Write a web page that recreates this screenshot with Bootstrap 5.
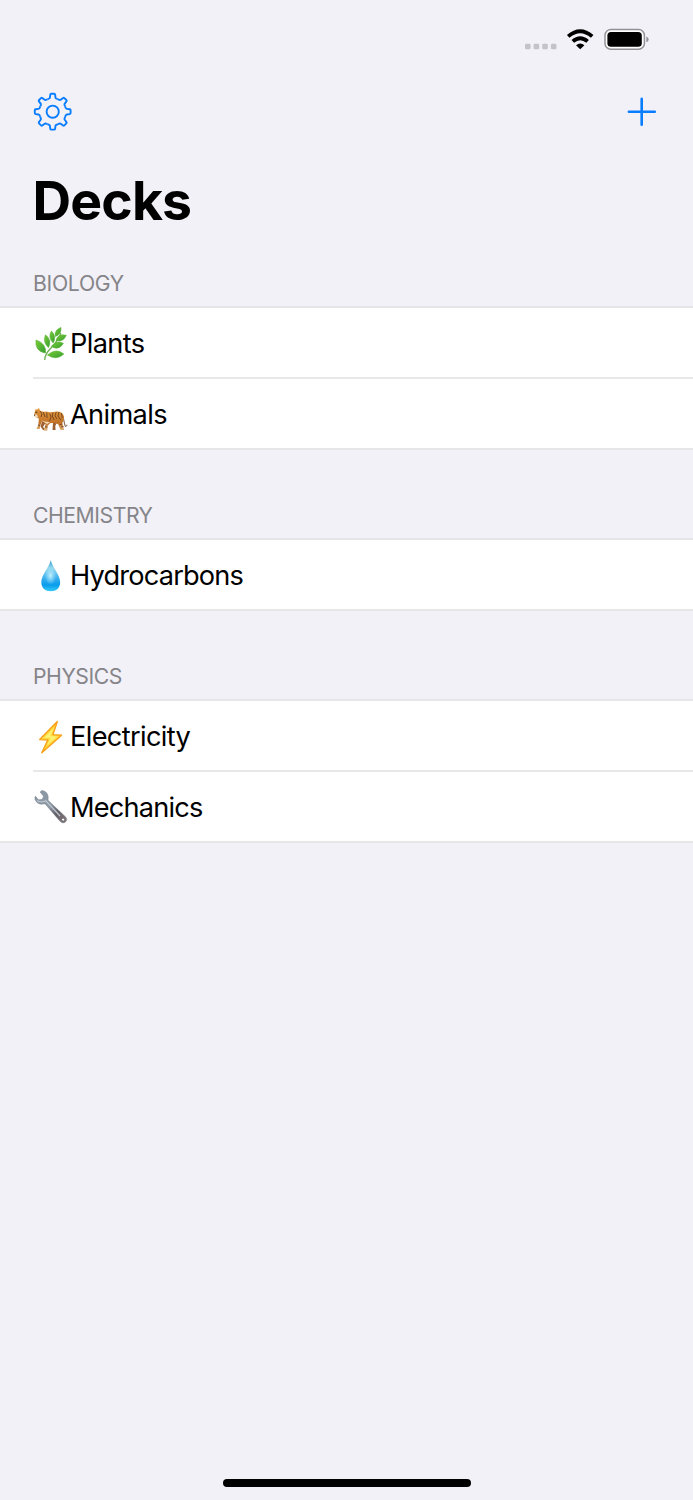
<!DOCTYPE html>
<html lang="en">
<head>
<meta charset="utf-8">
<meta name="viewport" content="width=device-width, initial-scale=1">
<title>Decks</title>
<link href="https://cdn.jsdelivr.net/npm/bootstrap@5.3.0/dist/css/bootstrap.min.css" rel="stylesheet">
<style>
  body { background: #f2f1f7; color: #000; font-family: Inter, "Liberation Sans", sans-serif; }
  .screen { height: 1500px; overflow: hidden; }
  .status { height: 78px; padding: 23px 38px 0 0; }
  .toolbar { height: 66px; padding: 0 33px; }
  .title { font-size: 53.5px; line-height: 64px; font-weight: 700; letter-spacing: -.85px; margin: 25px 0 0 32.5px; }
  .group-head { font-size: 21.2px; line-height: 26px; color: #858489; padding-left: 33px; margin: 52px 0 10px; font-weight: 400; letter-spacing: -.45px; }
  .title + .group-head { margin-top: 37px; letter-spacing: -.3px; }
  .deck-list { border-top: 2px solid #e6e6e9; border-bottom: 2px solid #e6e6e9; background: #fff; border-radius: 0; }
  .deck { height: 69px; padding: 2px 0 0 33px; border: 0; background: #fff; color: #000; border-radius: 0 !important; }
  .deck + .deck { height: 71px; padding-top: 4px; }
  .deck + .deck::before { content: ""; position: absolute; left: 33px; right: 0; top: 0; height: 1.5px; background: #e8e8ea; }
  .deck svg { width: 36px; height: 36px; flex: none; }
  .deck span { font-size: 27.2px; line-height: 34px; margin-left: 1px; letter-spacing: -.65px; }
  .deck .tight { letter-spacing: -.82px; }
  .home { width: 248px; height: 8px; border-radius: 4px; background: #000; margin-bottom: 13px; }
</style>
</head>
<body>
<main class="screen d-flex flex-column">
  <div class="status d-flex justify-content-end align-items-start">
    <svg width="132" height="34" viewBox="523 23 132 34">
      <g fill="#c4c3c8"><rect x="525" y="43.7" width="5.6" height="5.6" rx="1.4"/><rect x="533.6" y="43.7" width="5.6" height="5.6" rx="1.4"/><rect x="542.2" y="43.7" width="5.6" height="5.6" rx="1.4"/><rect x="550.9" y="43.7" width="5.6" height="5.6" rx="1.4"/></g>
      <g fill="none" stroke="#000" stroke-width="3.9"><path d="M568.2 36.4Q580.2 26 592.2 36.4"/><path d="M572.8 41.4Q580.2 35 587.6 41.4"/></g>
      <path d="M576 45.2Q580.2 41.9 584.4 45.2L580.2 49.3Z"/>
      <rect x="605" y="29.6" width="39.4" height="19.6" rx="5.8" fill="#fff" stroke="#929196" stroke-width="1.5"/>
      <rect x="607.4" y="32" width="34.4" height="14.8" rx="3.6"/>
      <path d="M646.3 36.5Q648.7 37.4 648.7 39.4T646.3 42.3Z" fill="#929196"/>
    </svg>
  </div>
  <nav class="toolbar d-flex justify-content-between align-items-center">
    <svg width="40" height="40" viewBox="-19.7 -20.7 40 40" fill="none" stroke="#087dff" stroke-width="1.9" stroke-linejoin="round" role="img" aria-label="Settings">
      <defs><path id="tooth" d="M-5.13-12.38Q-4.2-12.9-3.5-13.2Q-2.9-13.5-2.8-14.2L-2.4-17.1Q-2.3-17.9-1.4-17.9H1.4Q2.3-17.9 2.4-17.1L2.8-14.2Q2.9-13.5 3.5-13.2Q4.2-12.9 5.13-12.38"/></defs>
      <use href="#tooth"/><use href="#tooth" transform="rotate(45)"/><use href="#tooth" transform="rotate(90)"/><use href="#tooth" transform="rotate(135)"/><use href="#tooth" transform="rotate(180)"/><use href="#tooth" transform="rotate(225)"/><use href="#tooth" transform="rotate(270)"/><use href="#tooth" transform="rotate(315)"/>
      <circle r="6.1"/>
    </svg>
    <svg width="36" height="36" viewBox="624 93 36 36" fill="none" stroke="#087dff" stroke-width="2.6" stroke-linecap="round" role="img" aria-label="Add"><path d="M628.9 111.8H654.8M641.7 98.9V124.8"/></svg>
  </nav>
  <h1 class="title">Decks</h1>

  <h2 class="group-head">BIOLOGY</h2>
  <div class="list-group deck-list">
    <div class="list-group-item deck d-flex align-items-center">
      <svg viewBox="0 0 36 36">
        <defs><linearGradient id="lf" x1="0" y1="0" x2="1" y2="1"><stop stop-color="#7ace35"/><stop offset="1" stop-color="#359c32"/></linearGradient></defs>
        <path d="M11.7 34Q11.8 28 18 22Q24 16 28 7" fill="none" stroke="#70ad4f" stroke-width="1.3"/>
        <g fill="url(#lf)" stroke="#58b236" stroke-width=".6"><path d="M28 1.5Q21 4 22.4 10.5Q28.5 8.7 28 1.5Z"/><path d="M18.4 5Q14.5 11.5 20.2 17Q24 10.5 18.4 5Z"/><path d="M12.5 8.8Q9.3 16 15.5 21.5Q19.2 14 12.5 8.8Z"/><path d="M3 14Q1.8 25.5 12.6 27Q13.4 17.5 3 14Z"/><path d="M33.3 9.3Q25.5 7.3 23 14.3Q29.8 17 33.3 9.3Z"/><path d="M30.4 17.4Q23.7 13.5 18.4 20.4Q25.5 25 30.4 17.4Z"/><path d="M30.8 28Q23.5 21.5 14.5 29Q23.2 35 30.8 28Z"/></g>
      </svg><span>Plants</span>
    </div>
    <div class="list-group-item deck d-flex align-items-center">
      <svg viewBox="0 -2 36 36">
        <defs><linearGradient id="tg" x1="0" y1="0" x2="0" y2="1"><stop stop-color="#e49a3d"/><stop offset=".65" stop-color="#c17227"/><stop offset="1" stop-color="#e5bb84"/></linearGradient></defs>
        <path d="M30 18Q31.5 24 31.8 26Q32.5 28.8 34.2 25.8" fill="none" stroke="#8b735e" stroke-width="1.1"/>
        <path d="M13 23L10 28 13 31H10L7.5 27.5 9.3 22ZM24 23L22.3 27 22.6 31H19.5L20 24Z" fill="#996134"/>
        <path d="M2 11.8L2.5 10.2 4 10.5 6 9 7 11.5Q9 13.2 13 12.4Q18 13.8 23 12.5Q29.5 12 31 17.5Q31.3 22 29.3 24L31.2 31H27.4L25.2 25.3Q20 23.6 17 24.2L14.7 27 14.3 31.8H10.8L12.5 25 9 22.3 7.2 27 6.8 30H3.4L5.3 26 5.8 20.3Q5.6 18.5 4 18.5Q1 18.5 1.3 15.5Z" fill="url(#tg)"/>
        <path d="M1.3 15.5Q4 14.5 5 17.5L3 18.5Q1 18 1.3 15.5ZM8 21Q12 23.5 17 23L14 25Z" fill="#f2dfbf"/>
        <g fill="none" stroke="#60371f" stroke-width=".8"><path d="M10.2 13L12 18M13.8 13.5L14 19M16.7 14.5L18 18L16.5 22M20 13.3L19.3 17L21 21M23.3 13L22 16.8L24 20M26 13L25 17L27.8 21M28.3 14L29.3 19M7 12L9 15L8 18M26.5 25.8L29 25M28 28L30.5 27.5M12 28L14.5 28M5 26L7 26.5"/></g>
        <path d="M2.5 13.4L4.3 13M1 16L2.2 16.2" stroke="#30241e" stroke-width="1"/>
      </svg><span>Animals</span>
    </div>
  </div>

  <h2 class="group-head">CHEMISTRY</h2>
  <div class="list-group deck-list">
    <div class="list-group-item deck d-flex align-items-center">
      <svg viewBox="0 0 36 36">
        <defs><linearGradient id="dr" x1="0" y1="0" x2="0" y2="1"><stop stop-color="#2b99cd"/><stop offset=".25" stop-color="#94d7ee"/><stop offset=".6" stop-color="#36aeee"/><stop offset=".8" stop-color="#079cec"/><stop offset="1" stop-color="#36c9f8"/></linearGradient><radialGradient id="sh"><stop stop-color="#c8f3ff" stop-opacity=".95"/><stop offset="1" stop-color="#a6e5fc" stop-opacity="0"/></radialGradient></defs>
        <path d="M17.8 2.2C19.5 9.8 27.2 16.8 27.2 24.2C27.2 30 23.2 33.2 17.8 33.2S8.3 30 8.3 24.2C8.3 16.8 16 9.8 17.8 2.2Z" fill="url(#dr)"/><ellipse cx="17.5" cy="17.5" rx="5.8" ry="9.5" fill="url(#sh)"/>
      </svg><span class="tight">Hydrocarbons</span>
    </div>
  </div>

  <h2 class="group-head">PHYSICS</h2>
  <div class="list-group deck-list">
    <div class="list-group-item deck d-flex align-items-center">
      <svg viewBox="0 1 36 36"><path d="M24.3 3.5L6.7 21.6 14.8 22 8.8 34.8 28.6 17.2 20 16.6Z" fill="#ffd83c" stroke="#f9a01b" stroke-width="1.4" stroke-linejoin="round"/><path d="M21 9.5L11 19.8 17.5 20.3 14 27.5 24.5 18.4 17.6 17.9Z" fill="#fff16e"/></svg><span>Electricity</span>
    </div>
    <div class="list-group-item deck d-flex align-items-center">
      <svg viewBox="0 2 36 36">
        <defs><linearGradient id="wr" x1="0" y1="0" x2="1" y2="1"><stop stop-color="#8998a5"/><stop offset=".48" stop-color="#8e99a5"/><stop offset=".7" stop-color="#605a61"/><stop offset="1" stop-color="#8f8584"/></linearGradient></defs>
        <path d="M9 2.5Q14.5 3.5 15.2 8.8L15 12.3L32.4 28.7Q35 31.4 32.5 34Q29.8 36.2 27 33.2L12 15.7Q4.5 17.5 2.2 11.7Q1.4 9.5 2.4 8.2L5.4 11.8 9.2 11.5 10.6 8.2 7.1 4Z" fill="url(#wr)" stroke="#717b86" stroke-width=".5"/>
        <path d="M4 12.5Q7.5 15.2 12.8 12.9L27 28" fill="none" stroke="#bac4cc" stroke-width="1.3"/>
        <circle cx="30.1" cy="31.6" r="1.6" fill="#fff" stroke="#565058" stroke-width=".8"/>
      </svg><span class="tight">Mechanics</span>
    </div>
  </div>
  <div class="home mt-auto mx-auto flex-shrink-0"></div>
</main>
<script src="https://cdn.jsdelivr.net/npm/bootstrap@5.3.0/dist/js/bootstrap.bundle.min.js"></script>
</body>
</html>
